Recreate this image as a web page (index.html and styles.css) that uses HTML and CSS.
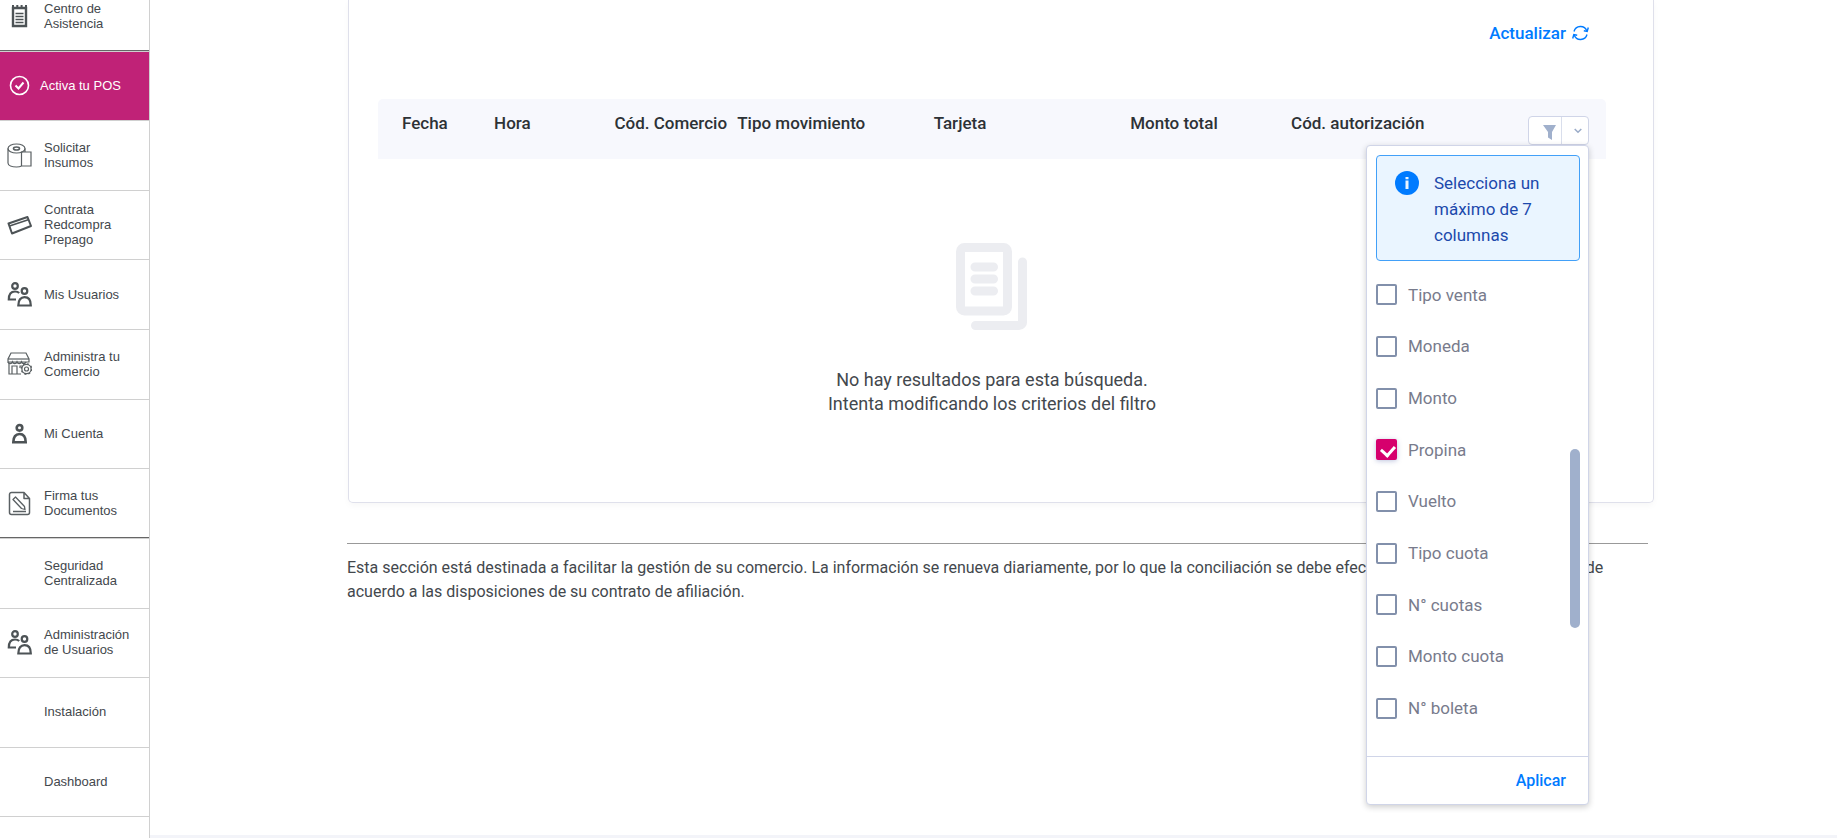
FILE: index.html
```html
<!DOCTYPE html>
<html lang="es">

<head>
    <meta charset="UTF-8">
    <meta name="viewport" content="width=device-width, initial-scale=1.0">
    <title>Movimientos</title>
    <link rel="stylesheet" href="styles.css">
</head>

<body>
    <!-- iconos compartidos -->
    <svg class="sprite" aria-hidden="true">
        <symbol id="ico-users" viewBox="0 0 25 25">
            <g fill="none" stroke="#4d5356" stroke-width="2.200">
                <circle cx="8" cy="4" r="2.800" />
                <path d="M9 17.500H1.800c0-5 2-8 6.200-8 1.800 0 3.200.5 4.200 1.500" />
                <circle cx="17.500" cy="9" r="2.800" />
                <path d="M11.300 23.500c0-5.500 2.500-8.300 6.200-8.300s6.300 2.800 6.300 8.300z" />
            </g>
        </symbol>
    </svg>

    <div class="page">
        <nav class="sidebar">
            <ul class="menu">
                <li class="menu-item dark">
                    <a href="#">
                        <svg class="icon" viewBox="0 0 25 25">
                            <path d="M6 5h13v18H6z" fill="none" stroke="#4d5356" stroke-width="2.400" />
                            <path d="M6 5V2M10.300 5V2M14.600 5V2M19 5V2" stroke="#4d5356" stroke-width="2" />
                            <path d="M8.500 10.500h8M8.500 13.500h8M8.500 16.500h8M8.500 19.500h8" stroke="#4d5356" stroke-width="1.500" />
                        </svg>
                        <span>Centro de Asistencia</span>
                    </a>
                </li>
                <li class="menu-item active">
                    <a href="#">
                        <svg class="icon" viewBox="0 0 25 25" fill="none" stroke="#fff">
                            <circle cx="12.500" cy="12.500" r="9" stroke-width="1.600" />
                            <path d="M8.500 12.500l3 3 5-6" stroke-width="2" />
                        </svg>
                        <span>Activa tu POS</span>
                    </a>
                </li>
                <li class="menu-item">
                    <a href="#">
                        <svg class="icon" viewBox="0 0 25 25" fill="none" stroke="#5a6063" stroke-width="1.200">
                            <ellipse cx="9.500" cy="5.500" rx="8.500" ry="4.500" />
                            <ellipse cx="9.500" cy="5.500" rx="3" ry="1.500" stroke-width="1.600" />
                            <path d="M1 5.500v14.500c0 2.500 4 4 8.500 4 2 0 4-.4 5-1M18 5.500V9M14.500 23V9H24v14z" />
                        </svg>
                        <span>Solicitar Insumos</span>
                    </a>
                </li>
                <li class="menu-item">
                    <a href="#">
                        <svg class="icon" viewBox="0 0 25 25" fill="none" stroke="#4d5356" stroke-width="2" stroke-linejoin="round">
                            <path d="M1.500 11.500L20.500 5l3.500 9-19 7.500z" />
                            <path d="M2.500 14L22 7.500" stroke-width="1.500" />
                        </svg>
                        <span>Contrata Redcompra Prepago</span>
                    </a>
                </li>
                <li class="menu-item">
                    <a href="#">
                        <svg class="icon"><use href="#ico-users" /></svg>
                        <span>Mis Usuarios</span>
                    </a>
                </li>
                <li class="menu-item">
                    <a href="#">
                        <svg class="icon" viewBox="0 0 25 25" fill="none" stroke="#5a6063" stroke-width="1.200">
                            <path d="M4 2h15l3 6v3H1V8z" />
                            <path d="M1 8h21" />
                            <path d="M1 11c1 2 3.500 2 4.500 0 1 2 3.500 2 4.500 0 1 2 3.500 2 4.500 0 1 2 3.500 2 4.500 0" stroke-width="1.600" />
                            <path d="M2 12v11h12M5 23v-8h5v8M13 17v-2h3" />
                            <circle cx="19.500" cy="18" r="2" />
                            <circle cx="19.500" cy="18" r="4.600" />
                            <circle cx="19.500" cy="18" r="5.300" stroke-dasharray="2 2.160" />
                        </svg>
                        <span>Administra tu Comercio</span>
                    </a>
                </li>
                <li class="menu-item">
                    <a href="#">
                        <svg class="icon" viewBox="0 0 25 25" fill="none" stroke="#4d5356" stroke-width="2.600">
                            <circle cx="12.500" cy="6.800" r="2.800" />
                            <path d="M6.300 21.300c0-5.500 2.400-8.300 6.200-8.300s6.200 2.800 6.200 8.300z" />
                        </svg>
                        <span>Mi Cuenta</span>
                    </a>
                </li>
                <li class="menu-item dark">
                    <a href="#">
                        <svg class="icon" viewBox="0 0 25 25" fill="none" stroke="#5a6063" stroke-width="1.500" stroke-linejoin="round">
                            <path d="M4.500 1.500H17l5.500 6v14a2 2 0 0 1-2 2h-16a2 2 0 0 1-2-2v-18a2 2 0 0 1 2-2zM17 1.500v6h5.500" />
                            <path d="M6 8.500l2.500-2.500 9 9.500.5 3-3.500-1z" stroke-width="1.300" />
                            <path d="M6 20.500h13" />
                        </svg>
                        <span>Firma tus Documentos</span>
                    </a>
                </li>
                <li class="menu-item">
                    <a href="#">
                        <span class="icon"></span>
                        <span>Seguridad Centralizada</span>
                    </a>
                </li>
                <li class="menu-item">
                    <a href="#">
                        <svg class="icon"><use href="#ico-users" /></svg>
                        <span>Administración de Usuarios</span>
                    </a>
                </li>
                <li class="menu-item">
                    <a href="#">
                        <span class="icon"></span>
                        <span>Instalación</span>
                    </a>
                </li>
                <li class="menu-item">
                    <a href="#">
                        <span class="icon"></span>
                        <span>Dashboard</span>
                    </a>
                </li>
                <li class="menu-item"></li>
            </ul>
        </nav>

        <div class="main">
            <main class="content">
                <section class="card">
                    <div class="toolbar">
                        <button class="refresh" type="button">
                            Actualizar
                            <svg width="17" height="16" viewBox="0 0 17 16" fill="none" stroke="#007bff" stroke-width="1.400" aria-hidden="true">
                                <path d="M2 6.500A6.700 6.700 0 0 1 14.800 6M15 9.500A6.700 6.700 0 0 1 2.200 10" />
                                <path d="M11.800 5.800l3.400.6L16.300 2.500M5.200 10.200l-3.400-.6L.7 13.500" />
                            </svg>
                        </button>
                    </div>

                    <table class="movs">
                        <colgroup>
                            <col class="c-fecha">
                            <col class="c-hora">
                            <col class="c-comercio">
                            <col class="c-tipo">
                            <col class="c-tarjeta">
                            <col class="c-monto">
                            <col class="c-aut">
                            <col>
                        </colgroup>
                        <thead>
                            <tr>
                                <th>Fecha</th>
                                <th>Hora</th>
                                <th>Cód. Comercio</th>
                                <th>Tipo movimiento</th>
                                <th>Tarjeta</th>
                                <th>Monto total</th>
                                <th>Cód. autorización</th>
                                <th class="th-filter">
                                    <div class="filter">
                                        <button class="filter-btn" type="button" aria-label="Columnas" aria-expanded="true">
                                            <span class="filter-funnel">
                                                <svg width="13" height="15" viewBox="0 0 13 15"><path d="M0 0h13L9 7v8l-4-2.500V7z" fill="#a0b0cc" /></svg>
                                            </span>
                                            <span class="filter-arrow">
                                                <svg width="8" height="6" viewBox="0 0 8 6"><path d="M.7 1L4 4.300 7.300 1" fill="none" stroke="#9aabc8" stroke-width="1.500" /></svg>
                                            </span>
                                        </button>

                                        <div class="dropdown">
                                            <div class="notice">
                                                <svg class="notice-icon" viewBox="0 0 24 24" aria-hidden="true">
                                                    <circle cx="12" cy="12" r="12" fill="#007bff" />
                                                    <path d="M10.500 6h3v2.200h-3zM10.500 9.500h3v8.500h-3z" fill="#eaf5ff" />
                                                </svg>
                                                <p>Selecciona un máximo de 7 columnas</p>
                                            </div>
                                            <div class="options">
                                                <label><input type="checkbox"> Tipo venta</label>
                                                <label><input type="checkbox"> Moneda</label>
                                                <label><input type="checkbox"> Monto</label>
                                                <label><input type="checkbox" checked> Propina</label>
                                                <label><input type="checkbox"> Vuelto</label>
                                                <label><input type="checkbox"> Tipo cuota</label>
                                                <label><input type="checkbox"> N° cuotas</label>
                                                <label><input type="checkbox"> Monto cuota</label>
                                                <label><input type="checkbox"> N° boleta</label>
                                                <span class="thumb"></span>
                                            </div>
                                            <div class="dropdown-footer">
                                                <button class="apply" type="button">Aplicar</button>
                                            </div>
                                        </div>
                                    </div>
                                </th>
                            </tr>
                        </thead>
                        <tbody>
                            <tr>
                                <td class="empty" colspan="8">
                                    <svg width="72" height="87" viewBox="0 0 72 87" aria-hidden="true">
                                        <rect x="4.500" y="4.500" width="47" height="63.500" rx="4" fill="none" stroke="#ecedf1" stroke-width="9" />
                                        <path d="M19 24h18.500M19 36h18.500M19 48h18.500M66.500 19v59.500a3.500 3.500 0 0 1-3.500 4H19.500" fill="none" stroke="#ecedf1" stroke-width="9" stroke-linecap="round" />
                                    </svg>
                                    <p>No hay resultados para esta búsqueda.<br>Intenta modificando los criterios del filtro</p>
                                </td>
                            </tr>
                        </tbody>
                    </table>
                </section>

                <p class="disclaimer">Esta sección está destinada a facilitar la gestión de su comercio. La información se renueva diariamente, por lo que la conciliación se debe efectuar de manera diaria, siempre de acuerdo a las disposiciones de su contrato de afiliación.</p>
            </main>
            <footer class="footer"></footer>
        </div>
    </div>
</body>

</html>
```

FILE: styles.css
```css
* {
    box-sizing: border-box;
}

body {
    margin: 0;
    font-family: Roboto, "Liberation Sans", sans-serif;
    font-size: 16px;
    color: #43484d;
    background-color: #fff;
}

p {
    margin: 0;
}

button {
    font-family: inherit;
    background: none;
    border: none;
    padding: 0;
    cursor: pointer;
}

.sprite {
    display: none;
}

.page {
    display: flex;
    height: 100vh;
    overflow: hidden;
}

/* Menu lateral */
.sidebar {
    flex: none;
    width: 150px;
    border-right: 1px solid #d0d0d0;
    overflow: hidden;
}

.menu {
    display: grid;
    grid-auto-rows: 1fr;
    min-height: 905px;
    margin: -18px 0 0;
    padding: 0;
    list-style: none;
}

.menu-item {
    display: flex;
    border-bottom: 1px solid #d0d0d0;
}

.menu-item.dark {
    box-shadow: inset 0 -1px #666;
}

.menu-item a {
    flex: 1;
    display: flex;
    align-items: center;
    gap: 12px;
    padding: 0 16px 1px 7px;
    font-family: "Liberation Sans", Arial, sans-serif;
    font-size: 13px;
    line-height: 15px;
    color: #43484d;
    text-decoration: none;
}

.menu-item.active a {
    gap: 8px;
    background-color: #c02277;
    color: #fff;
}

.icon {
    flex: none;
    width: 25px;
    height: 25px;
}

/* Contenido */
.main {
    flex: 1;
    display: flex;
    flex-direction: column;
}

.content {
    padding: 0 183px 0 197px;
}

.card {
    margin-left: 1px;
    padding: 21px 47px 86px 29px;
    border: 1px solid #dfe0eb;
    border-top: none;
    border-radius: 0 0 5px 5px;
    box-shadow: 0 3px 6px rgba(0, 0, 0, 0.03);
}

.toolbar {
    display: flex;
    justify-content: flex-end;
    padding-right: 17px;
    margin-bottom: 54px;
}

.refresh {
    display: flex;
    align-items: center;
    gap: 6px;
    font-size: 17px;
    line-height: 24px;
    font-weight: 500;
    color: #007bff;
}

.movs {
    width: 100%;
    table-layout: fixed;
    border-collapse: collapse;
}

.c-fecha { width: 7.5%; }
.c-hora { width: 9.8%; }
.c-comercio { width: 10%; }
.c-tipo { width: 16%; }
.c-tarjeta { width: 16%; }
.c-monto { width: 13.1%; }
.c-aut { width: 14%; }

.movs th {
    height: 60px;
    padding: 14px 0 0 24px;
    background-color: #f7f8fd;
    font-size: 17px;
    line-height: 20px;
    font-weight: 500;
    color: #2d3236;
    text-align: left;
    vertical-align: top;
    white-space: nowrap;
}

.movs th:first-child {
    border-top-left-radius: 5px;
}

.movs th.th-filter {
    padding: 17px 17px 0 0;
    border-top-right-radius: 5px;
    font-weight: 400;
    white-space: normal;
}

.empty {
    padding: 84px 0 0;
    text-align: center;
    font-size: 18px;
    line-height: 24px;
}

.empty svg {
    display: block;
    margin: 0 auto 38px;
}

/* Selector de columnas */
.filter {
    position: relative;
    width: 61px;
    margin-left: auto;
}

.filter-btn {
    display: flex;
    width: 61px;
    height: 29px;
    background-color: #fff;
    border: 1px solid #d0d5e8;
    border-radius: 4px;
}

.filter-funnel {
    display: flex;
    justify-content: flex-end;
    width: 33px;
    height: 27px;
    padding: 8px 5px 0 0;
    border-right: 1px solid #d9deec;
}

.filter-arrow {
    display: flex;
    flex: 1;
    justify-content: center;
    padding: 11px 0 0 5px;
}

.dropdown {
    position: absolute;
    top: 29px;
    right: 0;
    z-index: 5;
    width: 223px;
    background-color: #fff;
    border: 1px solid #d0d5e8;
    border-radius: 4px;
    box-shadow: 0 2px 6px rgba(0, 0, 0, 0.2);
}

.notice {
    display: flex;
    align-items: flex-start;
    gap: 15px;
    margin: 9px 8px 0 9px;
    padding: 14px 12px 12px 18px;
    background-color: #eaf5ff;
    border: 1px solid #42a0f8;
    border-radius: 4px;
    font-size: 17px;
    line-height: 26px;
    color: #1c49ac;
}

.notice-icon {
    flex: none;
    width: 24px;
    height: 24px;
    margin-top: 1px;
}

.options {
    position: relative;
    display: grid;
    grid-auto-rows: 1fr;
    min-height: 465px;
    margin: 8px 8px 0 9px;
}

.options label {
    display: flex;
    align-items: center;
    gap: 11px;
    font-size: 17px;
    line-height: 24px;
    color: #787b8c;
}

.options input {
    appearance: none;
    position: relative;
    flex: none;
    width: 21px;
    height: 21px;
    margin: 0;
    border: 2px solid #8290ab;
    border-radius: 2px;
}

.options input:checked {
    background-color: #d6006d;
    border-color: #d6006d;
    box-shadow: 0 1px 5px rgba(70, 90, 160, 0.35);
}

.options input:checked::after {
    content: "";
    position: absolute;
    left: 5px;
    top: 2px;
    width: 7px;
    height: 10px;
    border: solid #fff;
    border-width: 0 3px 3px 0;
    transform: rotate(42deg);
}

.thumb {
    position: absolute;
    top: 180px;
    right: 0;
    width: 10px;
    height: 179px;
    background-color: #a0b0cc;
    border-radius: 5px;
}

.dropdown-footer {
    display: flex;
    justify-content: flex-end;
    margin-top: 22px;
    padding: 12px 22px 11px;
    border-top: 1px solid #d0d5e8;
}

.apply {
    font-size: 16px;
    line-height: 24px;
    font-weight: 500;
    color: #007bff;
}

.disclaimer {
    margin: 40px 6px 0 0;
    padding-top: 12px;
    border-top: 1px solid #999;
    font-size: 16px;
    line-height: 24px;
}

.footer {
    margin-top: auto;
    height: 3px;
    background-color: #f3f4f9;
}
```
